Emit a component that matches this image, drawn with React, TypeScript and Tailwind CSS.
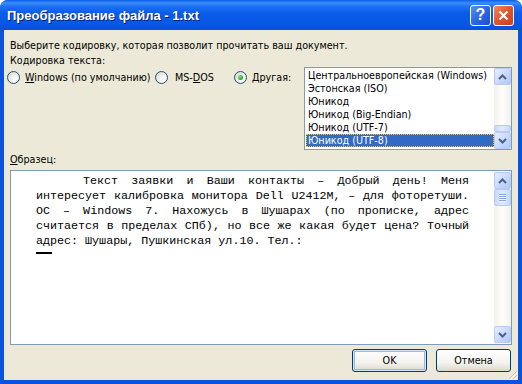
import React from 'react';

const ui = "font-['DejaVu_Sans',sans-serif] text-[9.6px] leading-[13px] text-black whitespace-nowrap";

function Radio({ checked }: { checked?: boolean }) {
    return (
        <span className="relative inline-flex w-[13px] h-[13px] rounded-full border border-[#1C5180] bg-[radial-gradient(circle_at_70%_70%,#ffffff_0%,#f1efe6_45%,#d6d3c6_100%)] items-center justify-center shrink-0">
            {checked && (
                <span className="w-[5px] h-[5px] rounded-full bg-[radial-gradient(circle_at_35%_35%,#8ae58a_0%,#2fb52f_55%,#1b8f1b_100%)]" />
            )}
        </span>
    );
}

function ScrollButton({ dir }: { dir: 'up' | 'down' }) {
    return (
        <div className="w-[17px] h-[17px] rounded-[2px] border border-[#B8CAF5] bg-[linear-gradient(135deg,#E6EEFF_0%,#C6D6FB_60%,#B4C8F6_100%)] flex items-center justify-center">
            <svg width="9" height="6" viewBox="0 0 9 6">
                {dir === 'up' ? (
                    <path d="M1 5 L4.5 1.5 L8 5" fill="none" stroke="#4D6185" strokeWidth="2" />
                ) : (
                    <path d="M1 1 L4.5 4.5 L8 1" fill="none" stroke="#4D6185" strokeWidth="2" />
                )}
            </svg>
        </div>
    );
}

function Thumb({ h, grip }: { h: number; grip?: boolean }) {
    return (
        <div
            className="w-[17px] rounded-[2px] border border-[#B8CAF5] bg-[linear-gradient(90deg,#C9D8FC_0%,#E1E9FE_50%,#C9D8FC_100%)] flex flex-col items-center justify-center gap-[1px]"
            style={{ height: h }}
        >
            {grip &&
                [0, 1, 2, 3].map((i) => (
                    <div key={i} className="w-[7px] h-[1px] bg-[#8CA6E3] shadow-[0_1px_0_#F0F4FF]" />
                ))}
        </div>
    );
}

const encodings = [
    'Центральноевропейская (Windows)',
    'Эстонская (ISO)',
    'Юникод',
    'Юникод (Big-Endian)',
    'Юникод (UTF-7)',
    'Юникод (UTF-8)',
];

const justified = [
    'интересует калибровка монитора Dell U2412M, – для фоторетуши.',
    'ОС – Windows 7. Нахожусь в Шушарах (по прописке, адрес',
    'считается в пределах СПб), но все же какая будет цена? Точный',
];

export default function App() {
    return (
        <div className="w-[522px] h-[384px] flex flex-col bg-[#0B52DD] rounded-t-[8px] overflow-hidden">
            {/* Title bar */}
            <div className="h-[30px] shrink-0 flex items-center pl-[7px] pr-[8px] bg-[linear-gradient(to_bottom,#0A5FE6_0%,#3D8DF9_10%,#1C6FF3_22%,#0A5CE8_45%,#0658E6_80%,#0A4FD8_100%)]">
                <span className="flex-1 pt-[2px] font-['Liberation_Sans',sans-serif] font-bold text-[13px] text-white [text-shadow:1px_1px_0_#0A1E7A]">
                    Преобразование файла - 1.txt
                </span>
                <div className="flex gap-[2px]">
                    <div className="w-[21px] h-[21px] rounded-[3px] border border-white bg-[linear-gradient(135deg,#5A92F7_0%,#2D66E6_50%,#1B4ED4_100%)] flex items-center justify-center font-['Liberation_Sans',sans-serif] font-bold text-[16px] leading-none text-white">
                        ?
                    </div>
                    <div className="w-[21px] h-[21px] rounded-[3px] border border-white bg-[linear-gradient(135deg,#F08A65_0%,#E0542B_50%,#C9431D_100%)] flex items-center justify-center">
                        <svg width="11" height="11" viewBox="0 0 11 11">
                            <path d="M1.5 1.5 L9.5 9.5 M9.5 1.5 L1.5 9.5" stroke="#ffffff" strokeWidth="2.2" />
                        </svg>
                    </div>
                </div>
            </div>

            {/* Body */}
            <div className="flex-1 mx-[4px] mb-[4px] bg-[#ECE9D8] flex flex-col pt-[9px] pl-[6px] pr-[6px] relative">
                <div className={ui}>Выберите кодировку, которая позволит прочитать ваш документ.</div>

                <div className="flex items-start mt-[2px]">
                    <div className="flex-1 flex flex-col">
                        <div className={ui}>Кодировка текста:</div>
                        <div className={`flex items-center mt-[4px] -ml-[3px] ${ui}`}>
                            <div className="w-[148px] flex items-center gap-[5px]">
                                <Radio />
                                <span><span className="underline">W</span>indows (по умолчанию)</span>
                            </div>
                            <div className="w-[79px] flex items-center gap-[7px]">
                                <Radio />
                                <span>MS-<span className="underline">D</span>OS</span>
                            </div>
                            <div className="flex items-center gap-[5px]">
                                <Radio checked />
                                <span><span className="underline">Д</span>ругая:</span>
                            </div>
                        </div>
                    </div>

                    {/* Encoding list */}
                    <div className="w-[208px] h-[83px] mt-[13px] border border-[#7F9DB9] bg-white flex">
                        <div className="flex-1 flex flex-col pt-[1px] pl-[1px] overflow-hidden">
                            {encodings.map((e, i) => (
                                <div
                                    key={e}
                                    className={`h-[13px] pl-[2px] ${ui} ${i === encodings.length - 1 ? 'bg-[#316AC5] text-white outline-1 outline-dotted outline-[#E8C86A] -outline-offset-1' : ''}`}
                                >
                                    {e}
                                </div>
                            ))}
                        </div>
                        <div className="w-[17px] flex flex-col bg-[linear-gradient(90deg,#F3F1EC_0%,#FEFEFB_50%,#F3F1EC_100%)]">
                            <ScrollButton dir="up" />
                            <div className="flex-1 flex flex-col justify-end">
                                <Thumb h={7} />
                            </div>
                            <ScrollButton dir="down" />
                        </div>
                    </div>
                </div>

                <div className={`mt-[3px] ${ui}`}>
                    <span className="underline">О</span>бразец:
                </div>

                {/* Preview */}
                <div className="mt-[4px] h-[175px] border border-[#7F9DB9] bg-white flex">
                    <div className="flex-1 pl-[25px] pt-[3px] font-['Liberation_Mono',monospace] text-[11.7px] leading-[15px] text-black">
                        <div className="w-[433px] pl-[47px] text-justify [text-align-last:justify]">
                            Текст заявки и Ваши контакты – Добрый день! Меня
                        </div>
                        {justified.map((l) => (
                            <div key={l} className="w-[433px] text-justify [text-align-last:justify]">
                                {l}
                            </div>
                        ))}
                        <div className="w-[433px]">адрес: Шушары, Пушкинская ул.10. Тел.:</div>
                        <div className="w-[16px] h-[2px] bg-black mt-[3px]" />
                    </div>
                    <div className="w-[17px] flex flex-col bg-[linear-gradient(90deg,#F3F1EC_0%,#FEFEFB_50%,#F3F1EC_100%)] py-[1px]">
                        <ScrollButton dir="up" />
                        <Thumb h={17} grip />
                        <div className="flex-1" />
                        <ScrollButton dir="down" />
                    </div>
                </div>

                {/* Buttons */}
                <div className="flex justify-end gap-[9px] mt-[4px] mr-[1px]">
                    <button className={`w-[75px] h-[23px] rounded-[3px] border border-[#003C74] bg-[linear-gradient(to_bottom,#FFFFFF_0%,#F4F3EE_60%,#DCD8CA_100%)] shadow-[inset_0_0_0_1px_#CEE7FF,inset_0_0_0_2px_#98B8EA] ${ui}`}>
                        OK
                    </button>
                    <button className={`w-[75px] h-[23px] rounded-[3px] border border-[#003C74] bg-[linear-gradient(to_bottom,#FFFFFF_0%,#F4F3EE_60%,#DCD8CA_100%)] ${ui}`}>
                        Отмена
                    </button>
                </div>

                {/* Resize grip */}
                <svg className="absolute right-0 bottom-0" width="12" height="12" viewBox="0 0 12 12">
                    <path d="M11 3 L3 11 M11 7 L7 11" stroke="#C5C2B2" strokeWidth="1" />
                    <path d="M12 4 L4 12 M12 8 L8 12" stroke="#FFFFFF" strokeWidth="1" />
                </svg>
            </div>
        </div>
    );
}
